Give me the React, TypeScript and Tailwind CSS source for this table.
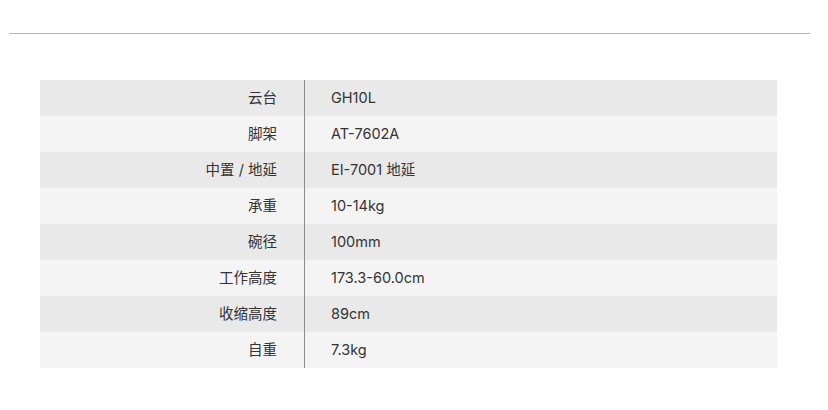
const ROWS: [string, string][] = [
  ['云台', 'GH10L'],
  ['脚架', 'AT-7602A'],
  ['中置 / 地延', 'EI-7001 地延'],
  ['承重', '10-14kg'],
  ['碗径', '100mm'],
  ['工作高度', '173.3-60.0cm'],
  ['收缩高度', '89cm'],
  ['自重', '7.3kg'],
];

export default function App() {
  return (
    <div
      className="h-[410px] w-[828px] bg-white text-[14.5px] text-[#333]"
      style={{ fontFamily: 'Inter, "Noto Sans CJK SC", sans-serif' }}
    >
      <div className="px-[9px] pt-[33px]">
        <div className="h-px w-[801px] bg-[#b4b4b4]" />
      </div>
      <div className="ml-[40px] mt-[46px] w-[737px]">
        {ROWS.map(([label, value], i) => (
          <div
            key={label}
            className={`flex h-9 items-center ${i % 2 === 0 ? 'bg-[#e9e9e9]' : 'bg-[#f4f4f4]'}`}
          >
            <div className="flex h-full w-[265px] items-center justify-end border-r border-[#8c8c8c] pr-[27px]">
              {label}
            </div>
            <div className="pl-[26px]">{value}</div>
          </div>
        ))}
      </div>
    </div>
  );
}
